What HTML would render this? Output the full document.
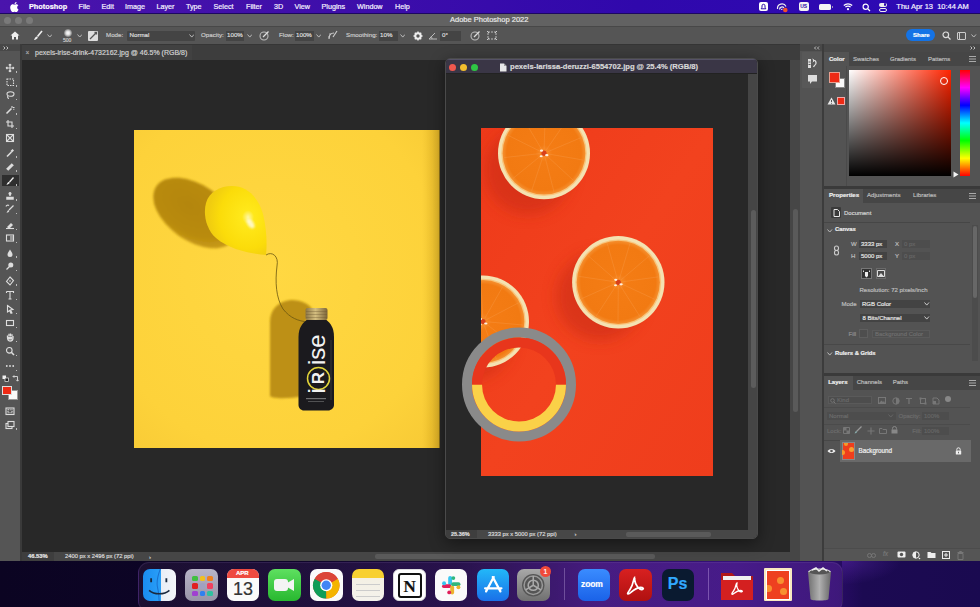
<!DOCTYPE html>
<html><head><meta charset="utf-8">
<style>
*{margin:0;padding:0;box-sizing:border-box}
html,body{width:980px;height:607px;overflow:hidden;background:#0c0520;font-family:"Liberation Sans",sans-serif;position:relative}
.a{position:absolute}
.t{position:absolute;white-space:nowrap;line-height:1;-webkit-text-stroke:0.2px currentColor}
</style></head><body>

<!-- desktop -->
<div class="a" style="left:0;top:560px;width:980px;height:47px;background:linear-gradient(90deg,#0b0422 0%,#0e0529 30%,#1a0a3c 48%,#2e0e68 62%,#34107a 75%,#2a0c68 85%,#1c0a52 88%,#1a0a50 100%)"></div>
<div class="a" style="left:842px;top:560px;width:60px;height:25px;background:radial-gradient(ellipse at 0% 0%,rgba(90,40,170,0.5),transparent 70%)"></div>
<!-- menu bar -->

<div class="a" style="left:0;top:0;width:980px;height:14px;background:linear-gradient(90deg,#4a14ac 0%,#3e0eaa 35%,#3008ac 65%,#2c0ab6 100%);border-bottom:1px solid #1c0860"></div>
<svg class="a" style="left:10px;top:2px" width="9" height="10" viewBox="0 0 17 20"><path fill="#fff" d="M14 10.6c0-2.6 2.1-3.8 2.2-3.9-1.2-1.8-3.1-2-3.8-2-1.6-.2-3.1.9-3.9.9-.8 0-2-.9-3.4-.9C3.4 4.8 1.7 5.8.8 7.4c-1.8 3.2-.5 7.9 1.3 10.500.9 1.3 1.9 2.7 3.200 2.6 1.300-.05 1.8-.8 3.3-.8s2 .8 3.3.8c1.400 0 2.300-1.300 3.100-2.600 1-1.500 1.400-2.900 1.400-3-.05 0-2.700-1-2.700-4.300zM11.500 3c.7-.9 1.200-2 1-3.100-1 0-2.200.700-2.900 1.500-.6.700-1.200 1.900-1 3 1.100.1 2.200-.6 2.900-1.400z"/></svg>
<div class="t" style="left:29px;top:3px;font-size:7.3px;font-weight:bold;color:#fff">Photoshop</div>
<div class="t" style="left:78.5px;top:3px;font-size:7.2px;color:#f4f0ff">File</div>
<div class="t" style="left:101.5px;top:3px;font-size:7.2px;color:#f4f0ff">Edit</div>
<div class="t" style="left:125px;top:3px;font-size:7.2px;color:#f4f0ff">Image</div>
<div class="t" style="left:156.5px;top:3px;font-size:7.2px;color:#f4f0ff">Layer</div>
<div class="t" style="left:186px;top:3px;font-size:7.2px;color:#f4f0ff">Type</div>
<div class="t" style="left:213.5px;top:3px;font-size:7.2px;color:#f4f0ff">Select</div>
<div class="t" style="left:246px;top:3px;font-size:7.2px;color:#f4f0ff">Filter</div>
<div class="t" style="left:274px;top:3px;font-size:7.2px;color:#f4f0ff">3D</div>
<div class="t" style="left:294.5px;top:3px;font-size:7.2px;color:#f4f0ff">View</div>
<div class="t" style="left:321.5px;top:3px;font-size:7.2px;color:#f4f0ff">Plugins</div>
<div class="t" style="left:357px;top:3px;font-size:7.2px;color:#f4f0ff">Window</div>
<div class="t" style="left:395px;top:3px;font-size:7.2px;color:#f4f0ff">Help</div>
<!-- status icons -->
<div class="a" style="left:758.500px;top:2px;width:9px;height:9px;background:#fff;border-radius:2px"></div>
<svg class="a" style="left:758.500px;top:2px" width="9" height="9" viewBox="0 0 9 9"><path d="M2.200 6.800H6.800L6 5.300V3.800A1.500 1.500 0 0 0 3 3.800V5.300Z" stroke="#2c0aa8" stroke-width="1" fill="none"/></svg>
<svg class="a" style="left:776px;top:1.500px" width="13" height="11" viewBox="0 0 13 11"><path d="M1.500 7A4.500 4.500 0 0 1 10 4.500M3.500 7.500A2.600 2.600 0 0 1 8 5.800M5.500 8A1 1 0 0 1 6.500 7" stroke="#eee" stroke-width="1.200" fill="none"/><circle cx="9.300" cy="8" r="2.300" fill="#f0502a"/></svg>
<div class="a" style="left:799px;top:2px;width:9.500px;height:9px;background:#f4f4f4;border-radius:2px"></div>
<div class="t" style="left:800.200px;top:4.300px;font-size:5px;font-weight:bold;color:#2c0aa8;-webkit-text-stroke:0">US</div>
<div class="a" style="left:819px;top:4px;width:12px;height:5.500px;background:#f4f4f4;border-radius:1.500px"></div>
<div class="a" style="left:831.500px;top:5.500px;width:1.200px;height:2.500px;background:#bbb;border-radius:0 1px 1px 0"></div>
<svg class="a" style="left:842.500px;top:2px" width="10" height="9" viewBox="0 0 10 9"><path d="M.800 3.500a6 6 0 0 1 8.400 0M2.400 5.200a3.600 3.600 0 0 1 5.200 0" stroke="#fff" stroke-width="1.200" fill="none"/><circle cx="5" cy="7.200" r="1.100" fill="#fff"/></svg>
<svg class="a" style="left:861.500px;top:2.500px" width="9" height="9" viewBox="0 0 9 9"><circle cx="3.700" cy="3.700" r="2.600" stroke="#fff" stroke-width="1.200" fill="none"/><path d="M5.600 5.600L8 8" stroke="#fff" stroke-width="1.300"/></svg>
<div class="a" style="left:878.500px;top:2.500px;width:8.500px;height:4px;background:#eee;border-radius:2px"></div>
<div class="a" style="left:883.500px;top:3.200px;width:2.600px;height:2.600px;background:#2c0aa8;border-radius:50%"></div>
<div class="a" style="left:878.500px;top:7.500px;width:8.500px;height:4px;border:1px solid #eee;border-radius:2px"></div>
<div class="t" style="left:896.300px;top:3px;font-size:7.500px;color:#f4f0ff">Thu Apr 13&nbsp; 10:44 AM</div>


<!-- title bar -->
<div class="a" style="left:0;top:14px;width:980px;height:12px;background:#626262"></div>
<div class="a" style="left:4px;top:17px;width:7px;height:7px;border-radius:50%;background:#7a7a7a"></div>
<div class="a" style="left:15px;top:17px;width:7px;height:7px;border-radius:50%;background:#7a7a7a"></div>
<div class="a" style="left:26px;top:17px;width:7px;height:7px;border-radius:50%;background:#7a7a7a"></div>
<div class="t" style="left:450px;top:16px;font-size:7.5px;color:#e8e8e8">Adobe Photoshop 2022</div>

<!-- options bar -->
<div class="a" style="left:0;top:26px;width:980px;height:18.500px;background:#555;border-top:1px solid #484848;border-bottom:1px solid #3a3a3a"></div>
<div id="opts">
<svg class="a" style="left:10px;top:31px" width="10" height="9" viewBox="0 0 10 9"><path d="M5 0.500L0.500 4.500H2V8.500H4V6H6V8.500H8V4.500H9.500Z" fill="#eee"/></svg>

<svg class="a" style="left:33px;top:30px" width="10" height="11" viewBox="0 0 10 11"><path d="M9 1L4.500 6.500" stroke="#eee" stroke-width="1.600"/><path d="M4 6.500C2.500 6.500 2 8 1 10C3 9.500 4.800 8.800 4.800 7.200Z" fill="#eee"/></svg>
<svg class="a" style="left:46.8px;top:33.7px" width="5.5" height="3.6" viewBox="0 0 5.5 3.6"><path d="M.5 .5L2.75 3.10L5.00 .5" stroke="#bbb" stroke-width="1" fill="none"/></svg>

<div class="a" style="left:63.5px;top:28.5px;width:8px;height:8px;border-radius:50%;background:radial-gradient(circle,#fff 0%,#ddd 35%,rgba(200,200,200,0.2) 75%,transparent 100%)"></div>
<div class="t" style="left:63px;top:37.5px;font-size:5px;color:#ccc">500</div>
<svg class="a" style="left:76.8px;top:33.7px" width="5.5" height="3.6" viewBox="0 0 5.5 3.6"><path d="M.5 .5L2.75 3.10L5.00 .5" stroke="#bbb" stroke-width="1" fill="none"/></svg>
<div class="a" style="left:88px;top:30.5px;width:10px;height:10px;background:#ddd;border-radius:1px"></div>
<svg class="a" style="left:88px;top:30.5px" width="10" height="10" viewBox="0 0 10 10"><path d="M2 8L8 2M6.500 1.500h2v2" stroke="#555" stroke-width="1.300" fill="none"/></svg>
<div class="t" style="left:106px;top:32px;font-size:6.2px;color:#c8c8c8">Mode:</div>
<div class="a" style="left:127px;top:31px;width:68px;height:10px;background:#444;border-radius:1px"></div>
<div class="t" style="left:129.5px;top:32px;font-size:6.2px;color:#ddd">Normal</div>
<svg class="a" style="left:188.8px;top:34.2px" width="5.5" height="3.6" viewBox="0 0 5.5 3.6"><path d="M.5 .5L2.75 3.10L5.00 .5" stroke="#bbb" stroke-width="1" fill="none"/></svg>
<div class="t" style="left:201px;top:32px;font-size:6.2px;color:#c8c8c8">Opacity:</div>
<div class="a" style="left:226px;top:31px;width:18px;height:10px;background:#444"></div>
<div class="t" style="left:227px;top:32px;font-size:6.2px;color:#ddd">100%</div>
<svg class="a" style="left:246.8px;top:34.2px" width="5.5" height="3.6" viewBox="0 0 5.5 3.6"><path d="M.5 .5L2.75 3.10L5.00 .5" stroke="#bbb" stroke-width="1" fill="none"/></svg>
<svg class="a" style="left:259px;top:30px" width="11" height="11" viewBox="0 0 11 11"><circle cx="5" cy="6" r="4" stroke="#bbb" stroke-width="1.100" fill="none"/><path d="M4 7L9.500 1.500" stroke="#ddd" stroke-width="1.300"/></svg>
<div class="t" style="left:279px;top:32px;font-size:6.2px;color:#c8c8c8">Flow:</div>
<div class="a" style="left:295px;top:31px;width:19px;height:10px;background:#444"></div>
<div class="t" style="left:296px;top:32px;font-size:6.2px;color:#ddd">100%</div>
<svg class="a" style="left:315.8px;top:34.2px" width="5.5" height="3.6" viewBox="0 0 5.5 3.6"><path d="M.5 .5L2.75 3.10L5.00 .5" stroke="#bbb" stroke-width="1" fill="none"/></svg>
<svg class="a" style="left:327px;top:30px" width="12" height="11" viewBox="0 0 12 11"><path d="M2 9C2 5 4 3 7 3M10 1L6 7" stroke="#ccc" stroke-width="1.200" fill="none"/><circle cx="3" cy="4" r=".700" fill="#ccc"/><circle cx="2" cy="7" r=".700" fill="#ccc"/></svg>
<div class="t" style="left:346px;top:32px;font-size:6.2px;color:#c8c8c8">Smoothing:</div>
<div class="a" style="left:378.5px;top:31px;width:19px;height:10px;background:#444"></div>
<div class="t" style="left:380px;top:32px;font-size:6.2px;color:#ddd">10%</div>
<svg class="a" style="left:399.8px;top:34.2px" width="5.5" height="3.6" viewBox="0 0 5.5 3.6"><path d="M.5 .5L2.75 3.10L5.00 .5" stroke="#bbb" stroke-width="1" fill="none"/></svg>
<svg class="a" style="left:412.500px;top:30.500px" width="10" height="10" viewBox="0 0 10 10"><circle cx="5" cy="5" r="2.700" stroke="#eee" stroke-width="2" fill="none"/><path d="M5 0.500V2M5 8V9.500M0.500 5H2M8 5H9.500M1.800 1.800L2.800 2.800M7.200 7.200L8.200 8.200M1.800 8.200L2.800 7.200M7.200 2.800L8.200 1.800" stroke="#eee" stroke-width="1.400"/></svg>
<svg class="a" style="left:428px;top:31px" width="10" height="9" viewBox="0 0 10 9"><path d="M1 8H9M1 8L7 2M4 8A4 4 0 0 0 3.200 5.600" stroke="#bbb" stroke-width="1" fill="none"/></svg>
<div class="a" style="left:440px;top:31px;width:21px;height:10px;background:#444"></div>
<div class="t" style="left:442px;top:32px;font-size:6.200px;color:#ddd">0°</div>

<svg class="a" style="left:470px;top:30px" width="11" height="11" viewBox="0 0 11 11"><circle cx="5" cy="6" r="4" stroke="#bbb" stroke-width="1.100" fill="none"/><path d="M4 7L9.500 1.500" stroke="#ddd" stroke-width="1.300"/></svg>
<svg class="a" style="left:486px;top:30px" width="12" height="11" viewBox="0 0 12 11"><path d="M2 2H10V9H2Z" stroke="#bbb" stroke-width="1" fill="none" stroke-dasharray="2 1"/><path d="M1 1L3 3M11 1L9 3M1 10L3 8M11 10L9 8" stroke="#ccc" stroke-width="1"/></svg>
<div class="a" style="left:906px;top:29px;width:29px;height:12px;background:#1473e6;border-radius:6px"></div>
<div class="t" style="left:913px;top:32px;font-size:6px;font-weight:bold;color:#fff">Share</div>
<svg class="a" style="left:942px;top:31px" width="9" height="9" viewBox="0 0 9 9"><circle cx="3.800" cy="3.800" r="2.800" stroke="#ddd" stroke-width="1.200" fill="none"/><path d="M5.900 5.900L8.500 8.500" stroke="#ddd" stroke-width="1.300"/></svg>
<div class="a" style="left:957px;top:31.500px;width:9px;height:8px;border:1.200px solid #ccc;border-radius:1px"></div>
<div class="a" style="left:957px;top:31.500px;width:3px;height:8px;border-right:1px solid #ccc"></div>
<svg class="a" style="left:971.2px;top:33.7px" width="5.5" height="3.6" viewBox="0 0 5.5 3.6"><path d="M.5 .5L2.75 3.10L5.00 .5" stroke="#bbb" stroke-width="1" fill="none"/></svg>
</div>

<!-- left toolbar -->
<div class="a" style="left:0;top:44px;width:20px;height:517px;background:#555555"></div>
<div class="a" style="left:20px;top:44px;width:2px;height:517px;background:#3a3a3a"></div>
<svg class="a" style="left:5.0px;top:62.7px" width="10" height="10" viewBox="0 0 10 10"><path d="M5 1V9M1 5H9M5 1L3.800 2.400M5 1L6.200 2.400M5 9L3.800 7.600M5 9L6.200 7.600M1 5L2.400 3.800M1 5L2.400 6.200M9 5L7.600 3.800M9 5L7.600 6.200" stroke="#ddd" fill="none" stroke-width="1.100"/></svg>
<svg class="a" style="left:5.0px;top:76.5px" width="10" height="10" viewBox="0 0 10 10"><rect x="2" y="2" width="6.500" height="6.500" stroke="#ddd" fill="none" stroke-width="1.100" stroke-dasharray="1.500 1"/></svg>
<svg class="a" style="left:5.0px;top:90.0px" width="10" height="10" viewBox="0 0 10 10"><ellipse cx="5.500" cy="4" rx="3.500" ry="2.300" stroke="#ddd" fill="none" stroke-width="1.100"/><path d="M3 5.800C2 7 3 8.500 4 8.500" stroke="#ddd" fill="none" stroke-width="1.100"/></svg>
<svg class="a" style="left:5.0px;top:104.5px" width="10" height="10" viewBox="0 0 10 10"><path d="M1.500 8.500L6.500 3.500" stroke="#ddd" stroke-width="1.600"/><path d="M7 1V3M8 2.500H9.500M8.500 4L9.200 4.700" stroke="#ddd" fill="none" stroke-width="1.100"/></svg>
<svg class="a" style="left:5.0px;top:119.0px" width="10" height="10" viewBox="0 0 10 10"><path d="M3 1V7H9M1 3H7V9" stroke="#ddd" fill="none" stroke-width="1.100" stroke-width="1.300"/></svg>
<svg class="a" style="left:5.0px;top:133.4px" width="10" height="10" viewBox="0 0 10 10"><rect x="1.500" y="1.500" width="7" height="7" stroke="#ddd" fill="none" stroke-width="1.100"/><path d="M1.500 1.500L8.500 8.500M8.500 1.500L1.500 8.500" stroke="#ddd" fill="none" stroke-width="1.100"/></svg>
<svg class="a" style="left:5.0px;top:147.5px" width="10" height="10" viewBox="0 0 10 10"><path d="M2 8.500L6.500 4" stroke="#ddd" stroke-width="1.600"/><path d="M5.500 3L7.500 1L9 2.500L7 4.500Z" fill="#ddd"/></svg>
<svg class="a" style="left:5.0px;top:161.7px" width="10" height="10" viewBox="0 0 10 10"><path d="M2.200 7.800L7.800 2.200" stroke="#ddd" stroke-width="3"/></svg>
<div class="a" style="left:2px;top:175.300px;width:16.500px;height:11px;background:#2e2e2e"></div>
<svg class="a" style="left:5.0px;top:175.8px" width="10" height="10" viewBox="0 0 10 10"><path d="M8.500 1.500L4.500 6" stroke="#eee" stroke-width="1.300"/><path d="M4 5.800C2.500 6 2 8 1.500 9C3 8.500 4.500 8 4.800 6.800Z" fill="#eee"/></svg>
<svg class="a" style="left:5.0px;top:190.5px" width="10" height="10" viewBox="0 0 10 10"><path d="M5 1.500V5M2 6.500H8V8H2Z" stroke="#ddd" stroke-width="1.500" fill="#ddd"/><circle cx="5" cy="2.500" r="1.500" fill="#ddd"/></svg>
<svg class="a" style="left:5.0px;top:204.4px" width="10" height="10" viewBox="0 0 10 10"><path d="M8.500 1.500L4 6" stroke="#ddd" stroke-width="1.300"/><path d="M3.500 6C2.500 6.500 2 8 1.500 9C3 8.500 4 8 4.300 7Z" fill="#ddd"/><path d="M1 2.500A2 2 0 0 1 4 1.500" stroke="#ddd" fill="none" stroke-width="1.100"/></svg>
<svg class="a" style="left:5.0px;top:220.0px" width="10" height="10" viewBox="0 0 10 10"><path d="M2 7L6 3L8 5L5 8H3Z" fill="#ddd"/><path d="M1 8.500H9" stroke="#ddd" fill="none" stroke-width="1.100"/></svg>
<svg class="a" style="left:5.0px;top:233.2px" width="10" height="10" viewBox="0 0 10 10"><rect x="1.500" y="2" width="7" height="6" stroke="#ddd" fill="none" stroke-width="1.100"/><rect x="5" y="2.500" width="3" height="5" fill="#999"/></svg>
<svg class="a" style="left:5.0px;top:247.6px" width="10" height="10" viewBox="0 0 10 10"><path d="M5 1.500C3 4.500 2.500 5.500 2.500 6.500A2.500 2.500 0 0 0 7.500 6.500C7.500 5.500 7 4.500 5 1.500Z" fill="#ddd"/></svg>
<svg class="a" style="left:5.0px;top:261.2px" width="10" height="10" viewBox="0 0 10 10"><circle cx="5.800" cy="4" r="2.500" fill="#ddd"/><path d="M4.500 5.500L1.500 8.500" stroke="#ddd" stroke-width="1.300"/></svg>
<svg class="a" style="left:5.0px;top:275.6px" width="10" height="10" viewBox="0 0 10 10"><path d="M5 1L8.500 4.500L5 9L1.500 5.500Z" stroke="#ddd" fill="none" stroke-width="1.100"/><circle cx="5" cy="5" r=".800" fill="#ddd"/></svg>
<svg class="a" style="left:5.0px;top:290.0px" width="10" height="10" viewBox="0 0 10 10"><path d="M1.500 1.500H8.500V3M5 1.500V9M3.500 9H6.500M1.500 1.500V3" stroke="#ddd" fill="none" stroke-width="1.100" stroke-width="1.300"/></svg>
<svg class="a" style="left:5.0px;top:304.4px" width="10" height="10" viewBox="0 0 10 10"><path d="M2.500 1.500L8 5.500L5.500 6L7 9L6 9.300L4.500 6.500L2.500 8Z" stroke="#ddd" fill="none" stroke-width="1.100"/></svg>
<svg class="a" style="left:5.0px;top:318.0px" width="10" height="10" viewBox="0 0 10 10"><rect x="1.500" y="2.500" width="7" height="5" stroke="#ddd" fill="none" stroke-width="1.100" stroke-width="1.300"/></svg>
<svg class="a" style="left:5.0px;top:332.4px" width="10" height="10" viewBox="0 0 10 10"><path d="M2.500 5V3.500M4 4.500V1.800M5.500 4.500V1.500M7 4.500V2.200M2.500 5C2.500 8 3.500 9 5 9S8 8 8 6V4" stroke="#ddd" stroke-width="1.300" fill="none"/><path d="M3 5H7.500V7.500H3Z" fill="#ddd"/></svg>
<svg class="a" style="left:5.0px;top:346.4px" width="10" height="10" viewBox="0 0 10 10"><circle cx="4.300" cy="4.300" r="2.800" stroke="#ddd" fill="none" stroke-width="1.100" stroke-width="1.300"/><path d="M6.300 6.300L9 9" stroke="#ddd" stroke-width="1.600"/></svg>
<svg class="a" style="left:5.0px;top:361.0px" width="10" height="10" viewBox="0 0 10 10"><circle cx="1.800" cy="5" r=".900" fill="#ddd"/><circle cx="5" cy="5" r=".900" fill="#ddd"/><circle cx="8.200" cy="5" r=".900" fill="#ddd"/></svg>
<svg class="a" style="left:1.500px;top:375px" width="7" height="7" viewBox="0 0 7 7"><rect x="0.500" y="0.500" width="3.500" height="3.500" fill="#eee"/><rect x="3" y="3" width="3.500" height="3.500" fill="#222" stroke="#eee" stroke-width=".700"/></svg>
<svg class="a" style="left:11.500px;top:375px" width="7" height="7" viewBox="0 0 7 7"><path d="M1 1.500H5.500V6M4.200 4.800L5.500 6.200L6.800 4.800M2.200 0.300L1 1.500L2.200 2.700" stroke="#ddd" stroke-width=".900" fill="none"/></svg>
<div class="a" style="left:7.500px;top:390px;width:10.500px;height:10px;background:#fafafa;border:0.500px solid #999"></div>
<div class="a" style="left:2px;top:385.700px;width:10px;height:9px;background:#ee2a14;border:0.500px solid #ddd"></div>
<svg class="a" style="left:5.0px;top:405.7px" width="10" height="10" viewBox="0 0 10 10"><rect x="1" y="2" width="8" height="6.500" stroke="#ddd" fill="none" stroke-width="1.100"/><rect x="3" y="3.800" width="4" height="3" stroke="#ddd" fill="none" stroke-width="1.100" stroke-dasharray="1 .700"/></svg>
<svg class="a" style="left:5.0px;top:419.5px" width="10" height="10" viewBox="0 0 10 10"><rect x="1" y="3.500" width="6" height="5" stroke="#ddd" fill="none" stroke-width="1.100"/><rect x="3" y="1.500" width="6" height="5" fill="#555" stroke="#ddd" fill="none" stroke-width="1.100"/></svg>
<div class="a" style="left:0;top:44px;width:20px;height:7px;background:#484848"></div>
<svg class="a" style="left:3px;top:45.500px" width="6" height="4" viewBox="0 0 6 4"><path d="M.500 .500L2 2L.500 3.500M3.500 .500L5 2L3.500 3.500" stroke="#ccc" stroke-width=".900" fill="none"/></svg>

<div class="a" style="left:15.5px;top:71.2px;width:1.5px;height:1.5px;background:#bbb"></div><div class="a" style="left:15.5px;top:85.0px;width:1.5px;height:1.5px;background:#bbb"></div><div class="a" style="left:15.5px;top:98.5px;width:1.5px;height:1.5px;background:#bbb"></div><div class="a" style="left:15.5px;top:113.0px;width:1.5px;height:1.5px;background:#bbb"></div><div class="a" style="left:15.5px;top:127.5px;width:1.5px;height:1.5px;background:#bbb"></div><div class="a" style="left:15.5px;top:156.0px;width:1.5px;height:1.5px;background:#bbb"></div><div class="a" style="left:15.5px;top:170.2px;width:1.5px;height:1.5px;background:#bbb"></div><div class="a" style="left:15.5px;top:184.3px;width:1.5px;height:1.5px;background:#bbb"></div><div class="a" style="left:15.5px;top:199.0px;width:1.5px;height:1.5px;background:#bbb"></div><div class="a" style="left:15.5px;top:212.9px;width:1.5px;height:1.5px;background:#bbb"></div><div class="a" style="left:15.5px;top:228.5px;width:1.5px;height:1.5px;background:#bbb"></div><div class="a" style="left:15.5px;top:241.7px;width:1.5px;height:1.5px;background:#bbb"></div><div class="a" style="left:15.5px;top:256.1px;width:1.5px;height:1.5px;background:#bbb"></div><div class="a" style="left:15.5px;top:269.7px;width:1.5px;height:1.5px;background:#bbb"></div><div class="a" style="left:15.5px;top:284.1px;width:1.5px;height:1.5px;background:#bbb"></div><div class="a" style="left:15.5px;top:298.5px;width:1.5px;height:1.5px;background:#bbb"></div><div class="a" style="left:15.5px;top:312.9px;width:1.5px;height:1.5px;background:#bbb"></div><div class="a" style="left:15.5px;top:326.5px;width:1.5px;height:1.5px;background:#bbb"></div><div class="a" style="left:15.5px;top:340.9px;width:1.5px;height:1.5px;background:#bbb"></div><div class="a" style="left:15.5px;top:354.9px;width:1.5px;height:1.5px;background:#bbb"></div><div class="a" style="left:15.5px;top:369.5px;width:1.5px;height:1.5px;background:#bbb"></div><div class="a" style="left:15.5px;top:428.0px;width:1.5px;height:1.5px;background:#bbb"></div>
<!-- tab bar -->
<div class="a" style="left:22px;top:44px;width:778px;height:16px;background:#3d3d3d;border-top:1px solid #363636"></div>
<div class="a" style="left:22px;top:44.500px;width:170px;height:15.500px;background:#414141"></div>
<div class="t" style="left:25.500px;top:49.500px;font-size:6.500px;color:#aaa">&#215;</div>
<div class="t" style="left:35px;top:49px;font-size:7px;color:#d0d0d0">pexels-irise-drink-4732162.jpg @ 46.5% (RGB/8)</div>

<!-- canvas -->
<div class="a" style="left:22px;top:60px;width:769px;height:492px;background:#282828"></div>
<!-- main v scrollbar -->
<div class="a" style="left:790px;top:60px;width:11px;height:492px;background:#464646"></div>
<div class="a" style="left:793px;top:209px;width:5px;height:203px;background:#5a5a5a;border-radius:2.500px"></div>
<!-- status bar -->
<div class="a" style="left:22px;top:552px;width:778px;height:9px;background:#464646"></div>
<div class="a" style="left:22px;top:552px;width:32px;height:9px;background:#3e3e3e"></div>
<div class="t" style="left:28px;top:553.600px;font-size:5.800px;font-weight:bold;color:#e4e4e4">46.53%</div>
<div class="t" style="left:65px;top:553.600px;font-size:5.800px;color:#d8d8d8">2400 px x 2496 px (72 ppi)</div>
<div class="t" style="left:149px;top:553.500px;font-size:6px;color:#ccc">&#8250;</div>
<div class="a" style="left:375px;top:554px;width:280px;height:5px;background:#5a5a5a;border-radius:2px"></div>

<!-- right dock strip -->
<div class="a" style="left:800px;top:44px;width:22px;height:517px;background:#535353"></div>
<div class="a" style="left:822px;top:44px;width:2px;height:517px;background:#3c3c3c"></div>
<!-- right panels -->
<div class="a" style="left:824px;top:44px;width:156px;height:517px;background:#535353"></div>
<div class="a" style="left:800px;top:44px;width:22px;height:7px;background:#484848"></div>
<div class="a" style="left:802px;top:52px;width:20px;height:36px;background:#585858;border-radius:1px"></div>
<svg class="a" style="left:807px;top:58px" width="11" height="11" viewBox="0 0 11 11"><rect x="1" y="1" width="3" height="9" fill="#ddd"/><rect x="1.500" y="3.500" width="2" height="1" fill="#585858"/><rect x="1.500" y="6" width="2" height="1" fill="#585858"/><path d="M6 2.500C9.500 2 10 6 7.500 7.500L6.500 9" stroke="#ddd" stroke-width="1.300" fill="none"/><path d="M5.500 1L7.500 2.500L5.800 4" stroke="#ddd" stroke-width="1" fill="none"/></svg>
<svg class="a" style="left:807px;top:74px" width="11" height="11" viewBox="0 0 11 11"><path d="M1 1H10V7.500H5L3 10V7.500H1Z" fill="#ddd"/></svg>
<div class="a" style="left:824px;top:44px;width:156px;height:7.500px;background:#484848"></div>
<svg class="a" style="left:970px;top:45.500px" width="6" height="4" viewBox="0 0 6 4"><path d="M.500 .500L2 2L.500 3.500M3.500 .500L5 2L3.500 3.500" stroke="#ccc" stroke-width=".900" fill="none"/></svg>
<svg class="a" style="left:813.500px;top:45.500px" width="6" height="4" viewBox="0 0 6 4"><path d="M2 .500L.500 2L2 3.500M5 .500L3.500 2L5 3.500" stroke="#ccc" stroke-width=".900" fill="none"/></svg>
<div class="a" style="left:824px;top:51.5px;width:156px;height:14.5px;background:#464646"></div>
<div class="a" style="left:824px;top:51.5px;width:25px;height:14.5px;background:#535353"></div>
<div class="t" style="left:829px;top:55.5px;font-size:6px;color:#efefef;font-weight:bold;">Color</div>
<div class="t" style="left:853px;top:55.5px;font-size:6px;color:#bdbdbd;">Swatches</div>
<div class="t" style="left:890px;top:55.5px;font-size:6px;color:#bdbdbd;">Gradients</div>
<div class="t" style="left:928px;top:55.5px;font-size:6px;color:#bdbdbd;">Patterns</div>
<svg class="a" style="left:969px;top:55.75px" width="7" height="6" viewBox="0 0 7 6"><path d="M0 .500H7M0 3H7M0 5.500H7" stroke="#aaa" stroke-width="1"/></svg>
<div class="a" style="left:846px;top:66px;width:1px;height:120px;background:#4a4a4a"></div>
<div class="a" style="left:835px;top:78px;width:9.500px;height:10px;background:#fafafa;border:0.500px solid #888"></div>
<div class="a" style="left:829px;top:72px;width:11px;height:11px;background:#ee2a14;border:1px solid #e8a090"></div>
<svg class="a" style="left:826.500px;top:96.500px" width="9" height="8" viewBox="0 0 9 8"><path d="M4.500 .500L8.500 7.500H.500Z" fill="#e8e8e8"/><path d="M4.500 3V5.200M4.500 6V6.700" stroke="#444" stroke-width=".900"/></svg>
<div class="a" style="left:837px;top:96.500px;width:8px;height:8px;background:#ee2a14;border:1px solid #eaa"></div>
<div class="a" style="left:848.500px;top:70px;width:102px;height:106px;background:linear-gradient(to bottom,rgba(0,0,0,0),#000),linear-gradient(to right,#fff,#ff2400)"></div>
<div class="a" style="left:939.500px;top:77px;width:8px;height:8px;border:1.200px solid #fff;border-radius:50%"></div>
<div class="a" style="left:959.500px;top:70px;width:10.500px;height:106px;background:linear-gradient(to bottom,#ff0000 0%,#ff00ff 16.6%,#0000ff 33.3%,#00ffff 50%,#00ff00 66.6%,#ffff00 83.3%,#ff0000 100%)"></div>
<svg class="a" style="left:953px;top:171px" width="6" height="7" viewBox="0 0 6 7"><path d="M.500 .500L5.500 3.500L.500 6.500Z" fill="#f4f4f4"/></svg>
<div class="a" style="left:824px;top:186px;width:156px;height:2.500px;background:#3a3a3a"></div>
<div class="a" style="left:824px;top:188.5px;width:156px;height:14px;background:#464646"></div>
<div class="a" style="left:824px;top:188.5px;width:39px;height:14px;background:#535353"></div>
<div class="t" style="left:829px;top:192.4px;font-size:6.1px;color:#efefef;font-weight:bold;">Properties</div>
<div class="t" style="left:867px;top:192.4px;font-size:6.1px;color:#bdbdbd;">Adjustments</div>
<div class="t" style="left:913px;top:192.4px;font-size:6.1px;color:#bdbdbd;">Libraries</div>
<svg class="a" style="left:969px;top:192.5px" width="7" height="6" viewBox="0 0 7 6"><path d="M0 .500H7M0 3H7M0 5.500H7" stroke="#aaa" stroke-width="1"/></svg>
<div class="a" style="left:830.500px;top:207.300px;width:10.500px;height:10.500px;background:#3a3a3a;border-radius:1px"></div>
<svg class="a" style="left:832.500px;top:208.500px" width="7" height="8" viewBox="0 0 7 8"><path d="M1 .500H4.500L6.500 2.500V7.500H1Z" stroke="#e8e8e8" stroke-width="1" fill="none"/></svg>
<div class="t" style="left:844px;top:209.8px;font-size:6px;color:#d4d4d4;">Document</div>
<div class="a" style="left:824px;top:222px;width:146px;height:1px;background:#464646"></div>
<svg class="a" style="left:827.0px;top:228.8px" width="5.5" height="3.6" viewBox="0 0 5.5 3.6"><path d="M.5 .5L2.75 3.10L5.00 .5" stroke="#bbb" stroke-width="1" fill="none"/></svg>
<div class="t" style="left:835px;top:227.3px;font-size:5.8px;color:#eee;font-weight:bold;">Canvas</div>
<div class="t" style="left:851px;top:240.5px;font-size:6px;color:#bbb;">W</div>
<div class="a" style="left:859px;top:240px;width:27.500px;height:7.500px;background:#434343"></div>
<div class="t" style="left:861px;top:240.7px;font-size:6px;color:#e4e4e4;">3333 px</div>
<div class="t" style="left:895px;top:240.5px;font-size:6px;color:#bbb;">X</div>
<div class="a" style="left:901.500px;top:240px;width:28px;height:7.500px;background:#4d4d4d"></div>
<div class="t" style="left:904px;top:240.7px;font-size:6px;color:#666;">0 px</div>
<div class="t" style="left:851px;top:253.2px;font-size:6px;color:#bbb;">H</div>
<div class="a" style="left:859px;top:252.200px;width:27.500px;height:7.500px;background:#434343"></div>
<div class="t" style="left:861px;top:253px;font-size:6px;color:#e4e4e4;">5000 px</div>
<div class="t" style="left:895px;top:253.2px;font-size:6px;color:#bbb;">Y</div>
<div class="a" style="left:901.500px;top:252.200px;width:28px;height:7.500px;background:#4d4d4d"></div>
<div class="t" style="left:904px;top:253px;font-size:6px;color:#666;">0 px</div>
<svg class="a" style="left:833px;top:244.500px" width="7" height="11" viewBox="0 0 7 11"><rect x="1.500" y="1" width="4" height="4.500" rx="2" stroke="#ccc" stroke-width="1.100" fill="none"/><rect x="1.500" y="5.500" width="4" height="4.500" rx="2" stroke="#ccc" stroke-width="1.100" fill="none"/></svg>
<div class="a" style="left:861px;top:268px;width:10.500px;height:10.500px;background:#333;border:0.500px solid #777"></div>
<svg class="a" style="left:863px;top:269.500px" width="7" height="8" viewBox="0 0 7 8"><path d="M.500 .500V2M6.500 .500V2" stroke="#ddd"/><path d="M2 2H5V6L3.500 7.500L2 6Z" fill="#eee"/></svg>
<div class="a" style="left:875.500px;top:268px;width:10.500px;height:10.500px;background:#4a4a4a;border:0.500px solid #6a6a6a"></div>
<svg class="a" style="left:877px;top:270px" width="8" height="7" viewBox="0 0 8 7"><path d="M.500 6.500H7.500V.500H.500Z" stroke="#ddd" fill="none"/><path d="M1.500 6L4 3L6.500 6Z" fill="#ddd"/></svg>
<div class="t" style="left:859.5px;top:286.5px;font-size:6px;color:#bcbcbc;">Resolution: 72 pixels/inch</div>
<div class="t" style="left:841.5px;top:300.8px;font-size:6px;color:#bcbcbc;">Mode</div>
<div class="a" style="left:860px;top:300.300px;width:70px;height:7.500px;background:#434343"></div>
<div class="t" style="left:862px;top:300.8px;font-size:6px;color:#e4e4e4;">RGB Color</div>
<svg class="a" style="left:924.2px;top:302.2px" width="5.5" height="3.6" viewBox="0 0 5.5 3.6"><path d="M.5 .5L2.75 3.10L5.00 .5" stroke="#ccc" stroke-width="1" fill="none"/></svg>
<div class="a" style="left:860px;top:314.200px;width:70px;height:7.800px;background:#434343"></div>
<div class="t" style="left:862.5px;top:314.8px;font-size:6px;color:#e4e4e4;">8 Bits/Channel</div>
<svg class="a" style="left:924.2px;top:316.2px" width="5.5" height="3.6" viewBox="0 0 5.5 3.6"><path d="M.5 .5L2.75 3.10L5.00 .5" stroke="#ccc" stroke-width="1" fill="none"/></svg>
<div class="t" style="left:848.5px;top:330.5px;font-size:6px;color:#8e8e8e;">Fill</div>
<div class="a" style="left:858.500px;top:329px;width:9.500px;height:9px;border:0.700px solid #5e5e5e;background:#4e4e4e"></div>
<div class="a" style="left:872px;top:329.500px;width:58px;height:8px;border:0.700px solid #5a5a5a;background:#505050"></div>
<div class="t" style="left:875px;top:330.8px;font-size:6px;color:#6e6e6e;">Background Color</div>
<div class="a" style="left:824px;top:344px;width:146px;height:1px;background:#484848"></div>
<svg class="a" style="left:827.0px;top:352.4px" width="5.5" height="3.6" viewBox="0 0 5.5 3.6"><path d="M.5 .5L2.75 3.10L5.00 .5" stroke="#bbb" stroke-width="1" fill="none"/></svg>
<div class="t" style="left:835px;top:351.3px;font-size:5.8px;color:#eee;font-weight:bold;">Rulers &amp; Grids</div>
<div class="a" style="left:971.800px;top:224.500px;width:6px;height:136px;background:#4c4c4c"></div>
<div class="a" style="left:972.500px;top:226px;width:4.500px;height:72px;background:#676767;border-radius:2px"></div>
<div class="a" style="left:824px;top:373.300px;width:156px;height:2.500px;background:#3a3a3a"></div>
<div class="a" style="left:824px;top:375.8px;width:156px;height:14.2px;background:#464646"></div>
<div class="a" style="left:824px;top:375.8px;width:28.5px;height:14.2px;background:#535353"></div>
<div class="t" style="left:828.2px;top:379.4px;font-size:6px;color:#efefef;font-weight:bold;">Layers</div>
<div class="t" style="left:856.7px;top:379.4px;font-size:6px;color:#bdbdbd;">Channels</div>
<div class="t" style="left:892.7px;top:379.4px;font-size:6px;color:#bdbdbd;">Paths</div>
<svg class="a" style="left:969px;top:379.90000000000003px" width="7" height="6" viewBox="0 0 7 6"><path d="M0 .500H7M0 3H7M0 5.500H7" stroke="#aaa" stroke-width="1"/></svg>
<div class="a" style="left:828px;top:396.300px;width:44px;height:8.200px;background:#4d4d4d;border:0.500px solid #5a5a5a"></div>
<svg class="a" style="left:830px;top:397.500px" width="6" height="6" viewBox="0 0 6 6"><circle cx="2.500" cy="2.500" r="1.800" stroke="#777" stroke-width=".900" fill="none"/><path d="M3.800 3.800L5.500 5.500" stroke="#777"/></svg>
<div class="t" style="left:837px;top:397.3px;font-size:6px;color:#6a6a6a;">Kind</div>
<svg class="a" style="left:878px;top:396.500px" width="8" height="7" viewBox="0 0 8 7"><rect x=".500" y=".500" width="7" height="6" stroke="#777" fill="none"/><path d="M1 6L3.500 3.500L5 5L6 4L7 6Z" fill="#777"/></svg>
<svg class="a" style="left:892px;top:396.500px" width="8" height="8" viewBox="0 0 8 8"><circle cx="4" cy="4" r="3.200" stroke="#777" fill="none"/><path d="M4 .800A3.200 3.200 0 0 1 4 7.200Z" fill="#777"/></svg>
<svg class="a" style="left:905px;top:396.500px" width="8" height="8" viewBox="0 0 8 8"><path d="M1 1.500H7M4 1.500V7" stroke="#777" stroke-width="1.200"/></svg>
<svg class="a" style="left:918.5px;top:396.500px" width="8" height="8" viewBox="0 0 8 8"><rect x="1.500" y="1.500" width="5" height="5" stroke="#777" fill="none"/><rect x=".500" y=".500" width="2" height="2" fill="#777"/><rect x="5.500" y="5.500" width="2" height="2" fill="#777"/></svg>
<svg class="a" style="left:931.6px;top:396.500px" width="8" height="8" viewBox="0 0 8 8"><path d="M1 1H5L7 3V7H1Z" stroke="#777" fill="none"/><rect x="1" y="4" width="3" height="3" fill="#777"/></svg>
<div class="a" style="left:945.2px;top:396px;width:6px;height:6px;border-radius:50%;background:#888"></div>
<div class="a" style="left:824px;top:407px;width:146px;height:1px;background:#4b4b4b"></div>
<div class="a" style="left:826.500px;top:411.800px;width:69.500px;height:8.200px;background:#4d4d4d"></div>
<div class="t" style="left:829px;top:412.8px;font-size:6px;color:#6c6c6c;">Normal</div>
<svg class="a" style="left:888.2px;top:414.2px" width="5.5" height="3.6" viewBox="0 0 5.5 3.6"><path d="M.5 .5L2.75 3.10L5.00 .5" stroke="#666" stroke-width="1" fill="none"/></svg>
<div class="t" style="left:898.5px;top:412.8px;font-size:6px;color:#6c6c6c;">Opacity:</div>
<div class="a" style="left:922px;top:411.800px;width:27px;height:8.200px;background:#4d4d4d"></div>
<div class="t" style="left:924px;top:412.8px;font-size:6px;color:#666;">100%</div>
<div class="a" style="left:824px;top:423.500px;width:146px;height:1px;background:#4b4b4b"></div>
<div class="t" style="left:827px;top:427.6px;font-size:6px;color:#6c6c6c;">Lock:</div>
<svg class="a" style="left:842.500px;top:426.500px" width="7" height="7" viewBox="0 0 7 7"><path d="M.500 .500H3.500V3.500H.500ZM3.500 3.500H6.500V6.500H3.500Z" fill="#777"/><path d="M.500 .500H6.500V6.500H.500Z" stroke="#777" fill="none"/></svg>
<svg class="a" style="left:853.500px;top:426px" width="8" height="8" viewBox="0 0 8 8"><path d="M7.500 .500L2.500 5.500" stroke="#999" stroke-width="1.200"/><path d="M2.200 5C1 5.500 1 7 .500 7.500C2 7.500 3 7 3 5.800Z" fill="#8aa"/></svg>
<svg class="a" style="left:866.500px;top:426.500px" width="8" height="8" viewBox="0 0 8 8"><path d="M4 .500V7.500M.500 4H7.500" stroke="#777" stroke-width="1.100"/></svg>
<svg class="a" style="left:878.500px;top:426.500px" width="8" height="7" viewBox="0 0 8 7"><path d="M.500 1.500H3L4 2.500H7.500V6.500H.500Z" stroke="#777" fill="none"/></svg>
<svg class="a" style="left:891px;top:426px" width="7" height="8" viewBox="0 0 7 8"><path d="M1.500 3.500V2.500A2 2 0 0 1 5.500 2.500V3.500" stroke="#888" fill="none"/><rect x=".500" y="3.500" width="6" height="4" fill="#888"/></svg>
<div class="t" style="left:912.2px;top:427.6px;font-size:6px;color:#6c6c6c;">Fill:</div>
<div class="a" style="left:922px;top:426.500px;width:27px;height:8.200px;background:#4d4d4d"></div>
<div class="t" style="left:924px;top:427.6px;font-size:6px;color:#666;">100%</div>
<div class="a" style="left:824px;top:439.500px;width:146px;height:1px;background:#474747"></div>
<div class="a" style="left:840px;top:440px;width:131px;height:22px;background:#696969"></div>
<svg class="a" style="left:827px;top:448px" width="9" height="6" viewBox="0 0 9 6"><path d="M.500 3C2.500 .300 6.500 .300 8.500 3C6.500 5.700 2.500 5.700 .500 3Z" fill="#eee"/><circle cx="4.500" cy="3" r="1.300" fill="#555"/></svg>
<div class="a" style="left:842px;top:442px;width:12.500px;height:18px;background:#ef3e1c;border:0.500px solid #888"></div>
<div class="a" style="left:844px;top:443px;width:4px;height:3px;background:#f59a2a;border-radius:0 0 3px 3px"></div>
<div class="a" style="left:848.500px;top:447px;width:5px;height:5px;background:#f7a030;border-radius:50%"></div>
<div class="a" style="left:842px;top:450px;width:3px;height:5px;background:#f59a2a;border-radius:0 3px 3px 0"></div>
<div class="t" style="left:858.5px;top:447.7px;font-size:6.3px;color:#f0f0f0;">Background</div>
<svg class="a" style="left:954.500px;top:447px" width="7" height="8" viewBox="0 0 7 8"><path d="M1.800 3.500V2.500A1.700 1.700 0 0 1 5.200 2.500V3.500" stroke="#eee" stroke-width="1" fill="none"/><rect x=".800" y="3.500" width="5.400" height="4" rx=".500" fill="#eee"/><rect x="3" y="4.800" width="1" height="1.500" fill="#696969"/></svg>
<div class="a" style="left:824px;top:547.500px;width:156px;height:13.500px;background:#555;border-top:1px solid #4c4c4c"></div>
<svg class="a" style="left:867px;top:551.5px" width="9" height="7" viewBox="0 0 9 7"><rect x=".500" y="1.500" width="4" height="4" rx="2" stroke="#777" fill="none"/><rect x="4.500" y="1.500" width="4" height="4" rx="2" stroke="#777" fill="none"/></svg>
<div class="t" style="left:883px;top:550.5px;font-size:6.5px;color:#777;"><i>fx</i></div>
<svg class="a" style="left:897px;top:551.0px" width="9" height="7" viewBox="0 0 9 7"><rect x=".500" y=".500" width="8" height="6" rx="1" fill="#eee"/><circle cx="4.500" cy="3.500" r="1.700" fill="#525252"/></svg>
<svg class="a" style="left:911.5px;top:551px" width="9" height="9" viewBox="0 0 9 9"><circle cx="4" cy="4" r="3.200" stroke="#eee" fill="none"/><path d="M4 .800A3.200 3.200 0 0 0 4 7.200Z" fill="#eee"/><circle cx="7.500" cy="7.500" r=".800" fill="#eee"/></svg>
<svg class="a" style="left:926.5px;top:551px" width="9" height="8" viewBox="0 0 9 8"><path d="M.500 1H3.500L4.500 2H8.500V7H.500Z" fill="#eee"/></svg>
<svg class="a" style="left:941.5px;top:550.5px" width="8" height="8" viewBox="0 0 8 8"><rect x=".500" y=".500" width="7" height="7" stroke="#eee" fill="none"/><path d="M4 2V6M2 4H6" stroke="#eee"/></svg>
<svg class="a" style="left:956.5px;top:550.5px" width="7" height="9" viewBox="0 0 7 9"><path d="M.500 1.500H6.500M2.500 1.500V.500H4.500V1.500M1 2.500H6V8.500H1Z" stroke="#777" fill="none"/></svg>

<!-- yellow image -->
<svg class="a" style="left:134px;top:130px" width="306" height="318" viewBox="134 130 306 318">
<defs>
<radialGradient id="ybg" cx="0.450" cy="0.450" r="0.800"><stop offset="0" stop-color="#ffd842"/><stop offset="0.700" stop-color="#fdd23a"/><stop offset="1" stop-color="#f6c834"/></radialGradient>
<radialGradient id="shd" cx="0.400" cy="0.450" r="0.600"><stop offset="0" stop-color="#b4860a"/><stop offset="0.750" stop-color="#b98b0c"/><stop offset="1" stop-color="#c89a18"/></radialGradient>
<radialGradient id="bal" cx="0.700" cy="0.450" r="0.650"><stop offset="0" stop-color="#fff6a0"/><stop offset="0.150" stop-color="#ffe81a"/><stop offset="0.700" stop-color="#fbdc0a"/><stop offset="1" stop-color="#f0cc10"/></radialGradient>
<filter id="bl1" x="-20%" y="-20%" width="140%" height="140%"><feGaussianBlur stdDeviation="1.200"/></filter>
<filter id="bl2" x="-20%" y="-20%" width="140%" height="140%"><feGaussianBlur stdDeviation="2"/></filter>
</defs>
<rect x="134" y="130" width="306" height="318" fill="url(#ybg)"/>
<defs><linearGradient id="redge" x1="0" x2="1"><stop offset="0" stop-color="#b08000" stop-opacity="0"/><stop offset="1" stop-color="#a07000" stop-opacity="0.300"/></linearGradient></defs><rect x="422" y="130" width="18" height="318" fill="url(#redge)"/><rect x="439" y="130" width="1" height="318" fill="#5a4a10" opacity="0.600"/>
<ellipse cx="195" cy="213" rx="47" ry="28" transform="rotate(35 195 213)" fill="url(#shd)" filter="url(#bl1)"/>
<path d="M270 396V322C270 309 279 301 291 300C302 300 310 304 313 311L306 321L303 330V396C290 399 272 399 270 396Z" fill="#bd9012" filter="url(#bl1)"/>
<path d="M266 255C272 251 279 256 277 266C275 282 276 298 283 309C290 318 298 321 308 322" stroke="#6a5610" stroke-width="0.800" fill="none"/>
<path d="M232 186C246 186 258 196 263 214C267 230 267 246 266 255C255 254 231 251 216 238C206 229 203 214 206 203C209 192 220 186 232 186Z" fill="url(#bal)"/>
<ellipse cx="250.500" cy="223.500" rx="3" ry="5.500" fill="#fffbe0" opacity="0.850" filter="url(#bl1)" transform="rotate(-35 250.500 223.500)"/>
<path d="M298.500 337C298.500 327 303 323 306.500 320H326.500C330 323 334 327 334 337V405C334 408 331 410.500 328 410.500H304C301 410.500 298.500 408 298.500 405Z" fill="#1b1a1e"/>
<defs><linearGradient id="cap" x1="0" y1="0" x2="1" y2="0"><stop offset="0" stop-color="#8a7444"/><stop offset="0.450" stop-color="#d4be80"/><stop offset="1" stop-color="#7a6438"/></linearGradient></defs>
<rect x="305.500" y="308" width="22" height="12" rx="2" fill="url(#cap)"/>
<path d="M306 311.500H327M306 314.500H327M306 317.500H327" stroke="#6a5630" stroke-width="0.600" opacity="0.600"/>
<path d="M331 340V400" stroke="#444" stroke-width="1.500" opacity="0.500"/>
<circle cx="318.500" cy="378.500" r="11" stroke="#e2d43a" stroke-width="1.500" fill="none"/>
<g transform="translate(324.500 393.500) rotate(-90)" font-family="Liberation Sans" fill="#f2f2f2">
<text x="0" y="0" font-size="24">i</text>
<text x="9.200" y="-0.500" font-size="17" font-weight="bold">R</text>
<text x="28.500" y="0" font-size="24">ise</text>
</g>
<rect x="306" y="398" width="20" height="1.200" fill="#aaa" opacity="0.600"/>
<rect x="308" y="401" width="16" height="1" fill="#888" opacity="0.500"/>
</svg>

<!-- floating window -->
<div class="a" style="left:445px;top:58px;width:313px;height:481px;background:#282828;border:1px solid #4a4a4a;border-radius:5px;overflow:hidden;box-shadow:0 4px 16px rgba(0,0,0,0.45)">
  <div class="a" style="left:0;top:0;width:311px;height:15px;background:#3a3646;border-bottom:1px solid #222;border-top:1px solid #555266"></div>
  <div class="a" style="left:2.800px;top:4.500px;width:7px;height:7px;border-radius:50%;background:#f0584e"></div>
  <div class="a" style="left:13.800px;top:4.500px;width:7px;height:7px;border-radius:50%;background:#f2be2e"></div>
  <div class="a" style="left:24.500px;top:4.500px;width:7px;height:7px;border-radius:50%;background:#2fc644"></div>
  <svg class="a" style="left:53px;top:3.500px" width="8" height="9" viewBox="0 0 8 9"><path d="M1 .500H5L7.500 3V8.500H1Z" fill="#e8e8e8"/><path d="M5 .500V3H7.500" fill="#999"/></svg>
  <div class="t" style="left:64px;top:4.300px;font-size:7.600px;font-weight:bold;color:#d8d8d8">pexels-larissa-deruzzi-6554702.jpg @ 25.4% (RGB/8)</div>
  <div class="a" style="left:302px;top:15px;width:9px;height:456px;background:#454545"></div>
  <div class="a" style="left:304.500px;top:151px;width:5px;height:178px;background:#5c5c5c;border-radius:2.500px"></div>
  <div class="a" style="left:0;top:471px;width:311px;height:9px;background:#474747"></div>
  <div class="a" style="left:0;top:471px;width:31px;height:9px;background:#3e3e3e"></div>
  <div class="t" style="left:5px;top:472.800px;font-size:5.500px;font-weight:bold;color:#ddd">25.36%</div>
  <div class="t" style="left:42px;top:472.600px;font-size:5.800px;color:#d8d8d8">3333 px x 5000 px (72 ppi)</div>
  <div class="t" style="left:128.500px;top:472.300px;font-size:6px;color:#ccc">&#8250;</div>
  <div class="a" style="left:180px;top:473px;width:85px;height:5px;background:#5a5a5a;border-radius:2px"></div>
</div>
<svg class="a" style="left:455px;top:127.500px" width="258" height="348" viewBox="455 127.500 258 348">
<defs>
<radialGradient id="flesh" cx="0.500" cy="0.500" r="0.500"><stop offset="0" stop-color="#f89030"/><stop offset="0.200" stop-color="#f47c14"/><stop offset="0.900" stop-color="#f27a12"/><stop offset="1" stop-color="#f59030"/></radialGradient>
<linearGradient id="rbg" x1="0" y1="0" x2="1" y2="1"><stop offset="0" stop-color="#ee3a1a"/><stop offset="0.500" stop-color="#f2421e"/><stop offset="1" stop-color="#ef3d1c"/></linearGradient>
<filter id="bl3" x="-50%" y="-50%" width="200%" height="200%"><feGaussianBlur stdDeviation="7"/></filter>
<clipPath id="img"><rect x="481" y="127.500" width="232" height="348"/></clipPath>
</defs>
<circle cx="519" cy="384" r="48" fill="#ec3a1c"/>
<g clip-path="url(#img)"><rect x="481" y="127.500" width="232" height="348" fill="url(#rbg)"/>
<circle cx="528" cy="170" r="44" fill="#c82a12" opacity="0.550" filter="url(#bl3)"/>
<circle cx="600" cy="296" r="44" fill="#c82a12" opacity="0.550" filter="url(#bl3)"/>
<circle cx="470" cy="336" r="44" fill="#c82a12" opacity="0.500" filter="url(#bl3)"/>
<g>
<circle cx="544" cy="152.7" r="46" fill="#f4e2b2"/>
<circle cx="544" cy="152.7" r="42.7" fill="#f8c67e"/>
<circle cx="544" cy="152.7" r="41.4" fill="url(#flesh)"/>
<path d="M547.9 153.4L583.4 159.6" stroke="#f9a050" stroke-width="0.800" opacity="0.400"/><path d="M546.9 155.4L573.4 179.8" stroke="#f9a050" stroke-width="0.800" opacity="0.400"/><path d="M545.0 156.6L554.0 191.4" stroke="#f9a050" stroke-width="0.800" opacity="0.400"/><path d="M542.8 156.5L531.5 190.7" stroke="#f9a050" stroke-width="0.800" opacity="0.400"/><path d="M540.9 155.2L513.0 177.9" stroke="#f9a050" stroke-width="0.800" opacity="0.400"/><path d="M540.0 153.1L504.2 157.1" stroke="#f9a050" stroke-width="0.800" opacity="0.400"/><path d="M540.4 150.9L508.2 134.9" stroke="#f9a050" stroke-width="0.800" opacity="0.400"/><path d="M541.9 149.3L523.5 118.4" stroke="#f9a050" stroke-width="0.800" opacity="0.400"/><path d="M544.1 148.7L545.3 112.7" stroke="#f9a050" stroke-width="0.800" opacity="0.400"/><path d="M546.3 149.4L566.7 119.8" stroke="#f9a050" stroke-width="0.800" opacity="0.400"/><path d="M547.7 151.2L580.9 137.2" stroke="#f9a050" stroke-width="0.800" opacity="0.400"/>
<circle cx="544" cy="152.7" r="2.600" fill="#d8401a"/>
<ellipse cx="541.5" cy="150.2" rx="1.600" ry="1.100" fill="#fff0e0"/>
<ellipse cx="546.8" cy="154.7" rx="1.700" ry="1.100" fill="#fff0e0"/>
<ellipse cx="541.2" cy="155.7" rx="1.500" ry="1" fill="#fff0e0"/>
</g>
<g>
<circle cx="618.3" cy="281.8" r="46.2" fill="#f4e2b2"/>
<circle cx="618.3" cy="281.8" r="42.9" fill="#f8c67e"/>
<circle cx="618.3" cy="281.8" r="41.6" fill="url(#flesh)"/>
<path d="M621.9 283.5L654.7 298.8" stroke="#f9a050" stroke-width="0.800" opacity="0.400"/><path d="M620.4 285.2L639.8 315.8" stroke="#f9a050" stroke-width="0.800" opacity="0.400"/><path d="M618.3 285.8L618.0 322.0" stroke="#f9a050" stroke-width="0.800" opacity="0.400"/><path d="M616.1 285.1L596.3 315.4" stroke="#f9a050" stroke-width="0.800" opacity="0.400"/><path d="M614.6 283.4L581.6 298.2" stroke="#f9a050" stroke-width="0.800" opacity="0.400"/><path d="M614.3 281.2L578.6 275.8" stroke="#f9a050" stroke-width="0.800" opacity="0.400"/><path d="M615.3 279.2L588.1 255.2" stroke="#f9a050" stroke-width="0.800" opacity="0.400"/><path d="M617.2 278.0L607.3 243.1" stroke="#f9a050" stroke-width="0.800" opacity="0.400"/><path d="M619.5 278.0L629.9 243.3" stroke="#f9a050" stroke-width="0.800" opacity="0.400"/><path d="M621.3 279.2L648.9 255.7" stroke="#f9a050" stroke-width="0.800" opacity="0.400"/><path d="M622.3 281.3L658.1 276.4" stroke="#f9a050" stroke-width="0.800" opacity="0.400"/>
<circle cx="618.3" cy="281.8" r="2.600" fill="#d8401a"/>
<ellipse cx="615.8" cy="279.3" rx="1.600" ry="1.100" fill="#fff0e0"/>
<ellipse cx="621.0999999999999" cy="283.8" rx="1.700" ry="1.100" fill="#fff0e0"/>
<ellipse cx="615.5" cy="284.8" rx="1.500" ry="1" fill="#fff0e0"/>
</g>
<g>
<circle cx="483" cy="321" r="46" fill="#f4e2b2"/>
<circle cx="483" cy="321" r="42.7" fill="#f8c67e"/>
<circle cx="483" cy="321" r="41.4" fill="url(#flesh)"/>
<path d="M487.0 321.3L522.8 324.5" stroke="#f9a050" stroke-width="0.800" opacity="0.400"/><path d="M486.2 323.4L514.6 345.5" stroke="#f9a050" stroke-width="0.800" opacity="0.400"/><path d="M484.3 324.8L496.4 358.7" stroke="#f9a050" stroke-width="0.800" opacity="0.400"/><path d="M482.1 324.9L473.9 359.9" stroke="#f9a050" stroke-width="0.800" opacity="0.400"/><path d="M480.1 323.8L454.3 348.8" stroke="#f9a050" stroke-width="0.800" opacity="0.400"/><path d="M479.1 321.8L443.8 328.9" stroke="#f9a050" stroke-width="0.800" opacity="0.400"/><path d="M479.3 319.5L445.7 306.4" stroke="#f9a050" stroke-width="0.800" opacity="0.400"/><path d="M480.7 317.8L459.5 288.6" stroke="#f9a050" stroke-width="0.800" opacity="0.400"/><path d="M482.8 317.0L480.8 281.1" stroke="#f9a050" stroke-width="0.800" opacity="0.400"/><path d="M485.0 317.5L502.7 286.2" stroke="#f9a050" stroke-width="0.800" opacity="0.400"/><path d="M486.5 319.1L518.4 302.4" stroke="#f9a050" stroke-width="0.800" opacity="0.400"/>
<circle cx="483" cy="321" r="2.600" fill="#d8401a"/>
<ellipse cx="480.5" cy="318.5" rx="1.600" ry="1.100" fill="#fff0e0"/>
<ellipse cx="485.8" cy="323" rx="1.700" ry="1.100" fill="#fff0e0"/>
<ellipse cx="480.2" cy="324" rx="1.500" ry="1" fill="#fff0e0"/>
</g>
</g>
<circle cx="519" cy="384" r="52" fill="none" stroke="#8a8a8a" stroke-width="10"/>
<path d="M472 384A47 47 0 0 0 566 384H556A37 37 0 0 1 482 384Z" fill="#fad148"/>
<path d="M472 384A47 47 0 0 1 566 384H556A37 37 0 0 0 482 384Z" fill="#e8361c"/>
</svg>
<!-- dock -->
<div class="a" style="left:138px;top:562px;width:705px;height:50px;border-radius:11px;background:linear-gradient(90deg,rgba(40,25,60,0.55),rgba(60,30,100,0.45) 45%,rgba(110,50,170,0.4) 65%,rgba(100,45,160,0.4) 85%,rgba(90,40,150,0.45));border:1px solid rgba(140,110,180,0.18)"></div>
<div class="a" style="left:143.3px;top:568.5px;width:32.5px;height:32.5px;border-radius:7px;background:linear-gradient(90deg,#1a8cf0 0%,#2aa0f8 55%,#e8eef6 55%,#f4f6fa 100%);overflow:hidden;"><svg class="a" style="left:0;top:0" width="32.500" height="32.500" viewBox="0 0 32 32"><path d="M17 0C14 8 13 14 14.500 19C16 25 15.500 29 16 32" stroke="#1a70d0" stroke-width="1" fill="none"/><path d="M8 9V13M23 9V13" stroke="#1a2a40" stroke-width="1.800"/><path d="M6 21C11 25.500 21 25.500 26 21" stroke="#1a2a40" stroke-width="1.600" fill="none"/></svg></div>
<div class="a" style="left:185.1px;top:568.5px;width:32.5px;height:32.5px;border-radius:7px;background:linear-gradient(#b8b4c8,#9894a8);overflow:hidden;"><div class="a" style="left:7.0px;top:7.0px;width:5.500px;height:5.500px;border-radius:1.500px;background:#40c040"></div><div class="a" style="left:14.5px;top:7.0px;width:5.500px;height:5.500px;border-radius:1.500px;background:#f0c020"></div><div class="a" style="left:22.0px;top:7.0px;width:5.500px;height:5.500px;border-radius:1.500px;background:#f08020"></div><div class="a" style="left:7.0px;top:14.5px;width:5.500px;height:5.500px;border-radius:1.500px;background:#e02020"></div><div class="a" style="left:14.5px;top:14.5px;width:5.500px;height:5.500px;border-radius:1.500px;background:#a0a0c0"></div><div class="a" style="left:22.0px;top:14.5px;width:5.500px;height:5.500px;border-radius:1.500px;background:#f04060"></div><div class="a" style="left:7.0px;top:22.0px;width:5.500px;height:5.500px;border-radius:1.500px;background:#a040d0"></div><div class="a" style="left:14.5px;top:22.0px;width:5.500px;height:5.500px;border-radius:1.500px;background:#3080f0"></div><div class="a" style="left:22.0px;top:22.0px;width:5.500px;height:5.500px;border-radius:1.500px;background:#30c0a0"></div></div>
<div class="a" style="left:226.9px;top:568.5px;width:32.5px;height:32.5px;border-radius:7px;background:#fafafa;overflow:hidden;"><div class="a" style="left:0;top:0;width:32.500px;height:9px;background:#ee4a40"></div><div class="t" style="left:9px;top:1.500px;font-size:6px;font-weight:bold;color:#fff">APR</div><div class="t" style="left:6px;top:11px;font-size:18px;color:#333">13</div></div>
<div class="a" style="left:268.4px;top:568.5px;width:32.5px;height:32.5px;border-radius:7px;background:linear-gradient(#5ee060,#28b830);overflow:hidden;"><div class="a" style="left:6px;top:10px;width:14px;height:12px;border-radius:3px;background:#f4f4f4"></div><svg class="a" style="left:19px;top:10px" width="8" height="12" viewBox="0 0 8 12"><path d="M0 4L7 0V12L0 8Z" fill="#f4f4f4"/></svg></div>
<div class="a" style="left:310px;top:568.5px;width:32.5px;height:32.5px;border-radius:7px;background:#fafafa;overflow:hidden;"><svg class="a" style="left:2px;top:2px" width="28.500" height="28.500" viewBox="0 0 28 28"><circle cx="14" cy="14" r="13" fill="#db4437"/><path d="M14 14L2.700 7.500A13 13 0 0 0 14 27Z" fill="#0f9d58"/><path d="M14 14L14 27A13 13 0 0 0 25.300 7.500Z" fill="#f4b400"/><path d="M14 14L2.700 7.500A13 13 0 0 1 25.300 7.500Z" fill="#db4437"/><circle cx="14" cy="14" r="6" fill="#fff"/><circle cx="14" cy="14" r="4.600" fill="#4285f4"/></svg></div>
<div class="a" style="left:351.7px;top:568.5px;width:32.5px;height:32.5px;border-radius:7px;background:linear-gradient(#f8d030 0%,#f8d030 28%,#f4f0e4 28%,#f4f2ec 100%);overflow:hidden;"><div class="a" style="left:4px;top:15px;width:24px;height:.600px;background:#ccc"></div><div class="a" style="left:4px;top:21px;width:24px;height:.600px;background:#ccc"></div><div class="a" style="left:4px;top:27px;width:24px;height:.600px;background:#ccc"></div></div>
<div class="a" style="left:393.4px;top:568.5px;width:32.5px;height:32.5px;border-radius:6px;background:#fff;overflow:hidden;border:0.500px solid #ddd"><div class="a" style="left:4px;top:3.500px;width:24px;height:25px;border:2px solid #111;border-radius:3px;background:#fff"></div><div class="t" style="left:9px;top:8.500px;font-size:17px;font-weight:bold;font-family:'Liberation Serif',serif;color:#111">N</div></div>
<div class="a" style="left:434.7px;top:568.5px;width:32.5px;height:32.5px;border-radius:7px;background:#fafafa;overflow:hidden;"><svg class="a" style="left:5px;top:5px" width="22.500" height="22.500" viewBox="0 0 22 22"><rect x="8" y="2" width="3.800" height="9" rx="1.900" fill="#36c5f0"/><rect x="2" y="10" width="9" height="3.800" rx="1.900" fill="#e01e5a"/><rect x="10" y="11" width="3.800" height="9" rx="1.900" fill="#ecb22e"/><rect x="11" y="8" width="9" height="3.800" rx="1.900" fill="#2eb67d"/><circle cx="4" cy="9" r="1.900" fill="#36c5f0"/><circle cx="13" cy="4" r="1.900" fill="#2eb67d"/><circle cx="18" cy="13" r="1.900" fill="#ecb22e"/><circle cx="9" cy="18" r="1.900" fill="#e01e5a"/></svg></div>
<div class="a" style="left:476.6px;top:568.5px;width:32.5px;height:32.5px;border-radius:7px;background:linear-gradient(#22b8f8,#1a70e8);overflow:hidden;"><svg class="a" style="left:5px;top:5px" width="22.500" height="22.500" viewBox="0 0 22 22"><path d="M11.500 3L4 17M10.500 3L18 17M3 14H19" stroke="#fff" stroke-width="2.200" stroke-linecap="round"/></svg></div>
<div class="a" style="left:517.3px;top:568.5px;width:32.5px;height:32.5px;border-radius:7px;background:linear-gradient(#a8a8a8,#707070);overflow:hidden;"><svg class="a" style="left:2px;top:2px" width="28.500" height="28.500" viewBox="0 0 28 28"><circle cx="14" cy="14" r="11" fill="#555"/><circle cx="14" cy="14" r="9" fill="none" stroke="#999" stroke-width="1.500"/><circle cx="14" cy="14" r="5" fill="none" stroke="#aaa" stroke-width="1.500"/><path d="M14 14V5M14 14L6.500 18.500M14 14L21.500 18.500" stroke="#aaa" stroke-width="1.500"/></svg></div>
<div class="a" style="left:540px;top:565.500px;width:11px;height:11px;border-radius:50%;background:#f04a3a"></div><div class="t" style="left:543.500px;top:567.500px;font-size:7px;color:#fff">1</div>
<div class="a" style="left:563.500px;top:568px;width:1px;height:32px;background:rgba(200,180,230,0.35)"></div>
<div class="a" style="left:577.6px;top:568.5px;width:32.5px;height:32.5px;border-radius:7px;background:linear-gradient(#3a8cff,#1a62e8);overflow:hidden;"><div class="t" style="left:3.500px;top:11.500px;font-size:8.500px;font-weight:bold;color:#fff;letter-spacing:-0.200px">zoom</div></div>
<div class="a" style="left:619px;top:568.5px;width:32.5px;height:32.5px;border-radius:7px;background:linear-gradient(#d82020,#b01010);overflow:hidden;"><svg class="a" style="left:6px;top:6px" width="20.500" height="20.500" viewBox="0 0 20 20"><path d="M10 2C8 2 9 8 5 14C3 17 2 18 3 18.500C5 19 8 13 15 12C18 12 18.500 13.500 17 14C14 15 10 10 9.500 5C9.300 3 9.500 2 10 2Z" stroke="#fff" stroke-width="1.700" fill="none"/></svg></div>
<div class="a" style="left:661.8px;top:568.5px;width:32.5px;height:32.5px;border-radius:7px;background:#0a1a30;overflow:hidden;"><div class="t" style="left:6px;top:7.500px;font-size:16px;font-weight:bold;color:#31a8ff">Ps</div></div>
<div class="a" style="left:707.700px;top:568px;width:1px;height:32px;background:rgba(220,190,250,0.35)"></div>
<svg class="a" style="left:719.800px;top:570px" width="34" height="31" viewBox="0 0 34 31"><path d="M1 3H12L15 6H33V30H1Z" fill="#b01818"/><rect x="3" y="6" width="28" height="4" fill="#f0f0f0"/><path d="M1 10H33V30H1Z" fill="#d42020"/><path d="M17 13C15.500 13 16.500 17 13.500 21C12 23 11.500 24 12 24.300C13.500 24.600 15.500 21 20.500 20.500C22.500 20.500 22.800 21.500 21.800 21.800C19.800 22.500 17 19 16.700 15.500Z" stroke="#fff" stroke-width="1.300" fill="none"/></svg>
<div class="a" style="left:764px;top:568px;width:28px;height:33px;background:#f8e8c0;border-radius:1px"></div>
<div class="a" style="left:766px;top:570px;width:24px;height:30px;background:#ee4020;border:1px solid #fff"></div>
<div class="a" style="left:777px;top:577px;width:7px;height:7px;border-radius:50%;background:#f89030"></div>
<div class="a" style="left:780px;top:588px;width:7px;height:7px;border-radius:50%;background:#f89030"></div>
<div class="a" style="left:767px;top:585px;width:5px;height:7px;border-radius:0 4px 4px 0;background:#f89030"></div>
<svg class="a" style="left:807px;top:567px" width="25" height="35" viewBox="0 0 25 35"><defs><linearGradient id="tr" x1="0" x2="1"><stop offset="0" stop-color="#707070"/><stop offset=".500" stop-color="#b0b0b0"/><stop offset="1" stop-color="#686868"/></linearGradient></defs><ellipse cx="12.500" cy="5" rx="11.500" ry="3.500" fill="#ddd"/><path d="M1 5L3.500 32C4 34 21 34 21.500 32L24 5Z" fill="url(#tr)"/><ellipse cx="12.500" cy="5" rx="10" ry="2.500" fill="#555"/><path d="M5 3L9 1L12 4L16 1L20 4" stroke="#eee" stroke-width="1.500" fill="none"/></svg>
</body></html>
